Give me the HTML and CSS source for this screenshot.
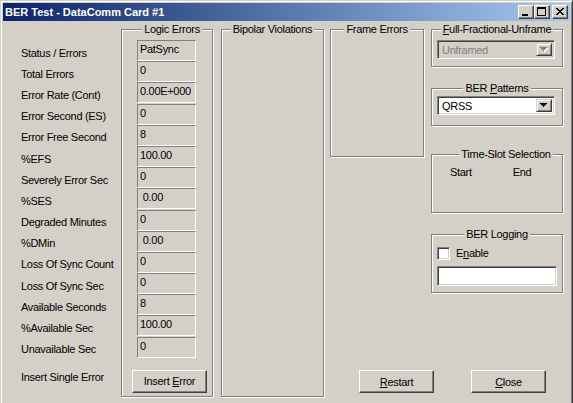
FILE: index.html
```html
<!DOCTYPE html>
<html lang="en">
  <head>
    <meta charset="UTF-8" />
    <title>BER Test - DataComm Card #1</title>
    <link rel="stylesheet" href="styles.css">
  </head>
  <body>
    <div class="window">
      <!-- Title bar -->
      <div class="titlebar">
        <span class="title">BER Test - DataComm Card #1</span>
        <div class="caption-buttons">
          <button class="cap-btn" title="Minimize">
            <svg width="14" height="12" viewBox="0 0 14 12"><path d="M3 8h6v2H3z"/></svg>
          </button>
          <button class="cap-btn" title="Maximize">
            <svg width="14" height="12" viewBox="0 0 14 12"><path d="M2 1h9v9H2zM3 3v6h7V3z" fill-rule="evenodd"/></svg>
          </button>
          <button class="cap-btn close" title="Close">
            <svg width="14" height="12" viewBox="0 0 14 12"><path d="M3 2h2v1H3zM9 2h2v1H9zM4 3h2v1H4zM8 3h2v1H8zM5 4h4v1H5zM6 5h2v1H6zM5 6h4v1H5zM4 7h2v1H4zM8 7h2v1H8zM3 8h2v1H3zM9 8h2v1H9z"/></svg>
          </button>
        </div>
      </div>

      <div class="client">
        <!-- Row captions -->
        <div class="labels">
          <div class="label">Status / Errors</div>
          <div class="label">Total Errors</div>
          <div class="label">Error Rate (Cont)</div>
          <div class="label">Error Second (ES)</div>
          <div class="label">Error Free Second</div>
          <div class="label">%EFS</div>
          <div class="label">Severely Error Sec</div>
          <div class="label">%SES</div>
          <div class="label">Degraded Minutes</div>
          <div class="label">%DMin</div>
          <div class="label">Loss Of Sync Count</div>
          <div class="label">Loss Of Sync Sec</div>
          <div class="label">Available Seconds</div>
          <div class="label">%Available Sec</div>
          <div class="label">Unavailable Sec</div>
          <div class="label insert-label">Insert Single Error</div>
        </div>

        <!-- Logic errors -->
        <fieldset class="group logic">
          <legend>Logic Errors</legend>
          <div class="values">
            <div class="value">PatSync</div>
            <div class="value">0</div>
            <div class="value">0.00E+000</div>
            <div class="value">0</div>
            <div class="value">8</div>
            <div class="value">100.00</div>
            <div class="value">0</div>
            <div class="value"> 0.00</div>
            <div class="value">0</div>
            <div class="value"> 0.00</div>
            <div class="value">0</div>
            <div class="value">0</div>
            <div class="value">8</div>
            <div class="value">100.00</div>
            <div class="value">0</div>
          </div>
          <button class="btn insert-btn">Insert <u>E</u>rror</button>
        </fieldset>

        <fieldset class="group bipolar">
          <legend>Bipolar Violations</legend>
        </fieldset>

        <div class="side">
          <div class="side-top">
            <fieldset class="group frame">
              <legend>Frame Errors</legend>
            </fieldset>

            <div class="options">
              <fieldset class="group framing">
                <legend><u>F</u>ull-Fractional-Unframe</legend>
                <div class="combo disabled">
                  <span class="combo-text">Unframed</span>
                  <span class="combo-arrow">
                    <svg width="8" height="5" viewBox="0 0 8 5"><path class="shade" d="M1 1h7v1H1zM2 2h5v1H2zM3 3h3v1H3zM4 4h1v1H4z"/><path d="M0 0h7v1H0zM1 1h5v1H1zM2 2h3v1H2zM3 3h1v1H3z"/></svg>
                  </span>
                </div>
              </fieldset>

              <fieldset class="group patterns">
                <legend>BER <u>P</u>atterns</legend>
                <div class="combo">
                  <span class="combo-text">QRSS</span>
                  <span class="combo-arrow">
                    <svg width="8" height="5" viewBox="0 0 8 5"><path d="M0 0h7v1H0zM1 1h5v1H1zM2 2h3v1H2zM3 3h1v1H3z"/></svg>
                  </span>
                </div>
              </fieldset>

              <fieldset class="group timeslot">
                <legend>Time-Slot Selection</legend>
                <div class="slot-head">
                  <span>Start</span>
                  <span>End</span>
                </div>
              </fieldset>

              <fieldset class="group logging">
                <legend>BER Logging</legend>
                <label class="check">
                  <span class="check-box"></span>
                  <span>E<u>n</u>able</span>
                </label>
                <div class="textbox"></div>
              </fieldset>
            </div>
          </div>

          <div class="actions">
            <button class="btn"><u>R</u>estart</button>
            <button class="btn"><u>C</u>lose</button>
          </div>
        </div>
      </div>
    </div>
  </body>
</html>
```

FILE: styles.css
```css
:root {
  --face: #d4d0c8;
  --shadow: #808080;
  --dark-shadow: #404040;
  --highlight: #ffffff;
}

* {
  box-sizing: border-box;
}

body {
  margin: 0;
  overflow: hidden;
  background: var(--face);
  font-family: "Liberation Sans", Arial, sans-serif;
  font-size: 11px;
  letter-spacing: -0.3px;
  color: #000;
}

/* Window frame */
.window {
  width: 573px;
  height: 420px;
  padding: 2px;
  background: var(--face);
  border: 1px solid;
  border-color: var(--face) var(--dark-shadow) var(--dark-shadow) var(--face);
  box-shadow: inset 1px 1px var(--highlight), inset -1px -1px var(--shadow);
}

.titlebar {
  height: 18px;
  display: flex;
  justify-content: space-between;
  align-items: flex-start;
  padding: 0 2px 0 2px;
  background: linear-gradient(to right, #0a246a, #a6caf0);
  color: #fff;
  font-weight: bold;
  letter-spacing: 0;
  line-height: 18px;
}

.caption-buttons {
  display: flex;
  margin-top: 2px;
}

.cap-btn {
  width: 16px;
  height: 14px;
  padding: 0;
  display: flex;
  border: 1px solid;
  border-color: var(--highlight) var(--dark-shadow) var(--dark-shadow) var(--highlight);
  box-shadow: inset -1px -1px var(--shadow);
  background: var(--face);
}

.cap-btn.close {
  margin-left: 2px;
}

/* Client area */
.client {
  display: flex;
  align-items: flex-start;
  padding-top: 2px;
}

.labels {
  width: 118px;
  padding: 19.6px 0 0 18px;
}

.label {
  height: 21.2px;
  line-height: 21.2px;
  white-space: nowrap;
}

.insert-label {
  margin-top: 7px;
}

/* Group boxes */
.group {
  margin: 0;
  padding: 0;
  min-width: 0;
  border: 1px solid var(--shadow);
  box-shadow: 1px 1px var(--highlight), inset 1px 1px var(--highlight);
}

.group legend {
  margin: 0 auto;
  padding: 0 2px;
  line-height: 13px;
  background: var(--face);
}

.logic {
  width: 92px;
  height: 374px;
  margin-right: 8px;
  padding: 4px 0 0 10px;
}

.values {
  display: flex;
  flex-direction: column;
  gap: 0.2px;
  padding-left: 5px;
}

.value {
  width: 59px;
  height: 21px;
  padding: 2px 0 0 2px;
  line-height: 13px;
  white-space: pre;
  border: 1px solid;
  border-color: var(--shadow) var(--highlight) var(--highlight) var(--shadow);
}

.btn {
  width: 75px;
  height: 23px;
  padding: 0;
  font: inherit;
  letter-spacing: inherit;
  color: #000;
  background: var(--face);
  border: 1px solid;
  border-color: var(--highlight) var(--dark-shadow) var(--dark-shadow) var(--highlight);
  box-shadow: inset -1px -1px var(--shadow);
}

.insert-btn {
  margin-top: 12.2px;
}

.bipolar {
  width: 103px;
  height: 374px;
  margin-right: 6px;
}

.side {
  display: flex;
  flex-direction: column;
}

.side-top {
  display: flex;
  align-items: flex-start;
  gap: 7px;
}

.frame {
  width: 94px;
  height: 134px;
}

.options {
  width: 132px;
  display: flex;
  flex-direction: column;
}

.framing {
  height: 44px;
  padding: 4px 5px 0;
}

.patterns {
  height: 44px;
  margin-top: 15px;
  padding: 1px 5px 0;
}

.timeslot {
  height: 65px;
  margin-top: 22px;
  padding: 5px 0 0 18px;
}

.slot-head {
  display: flex;
  gap: 41px;
  line-height: 13px;
}

.logging {
  height: 65px;
  margin-top: 15px;
  padding: 6px 5px 0;
}

/* Combo boxes */
.combo {
  width: 118px;
  height: 19px;
  display: flex;
  padding: 2px;
  background: #fff;
  border: 1px solid;
  border-color: var(--shadow) var(--highlight) var(--highlight) var(--shadow);
  box-shadow: inset 1px 1px var(--dark-shadow), inset -1px -1px var(--face);
}

.combo-text {
  flex: 1;
  padding-left: 2px;
  line-height: 15px;
}

.combo-arrow {
  width: 16px;
  display: flex;
  align-items: center;
  justify-content: center;
  background: var(--face);
  border: 1px solid;
  border-color: var(--face) var(--dark-shadow) var(--dark-shadow) var(--face);
  box-shadow: inset 1px 1px var(--highlight), inset -1px -1px var(--shadow);
}

.combo.disabled {
  background: var(--face);
  color: var(--shadow);
}

.combo.disabled svg {
  fill: var(--shadow);
}

.combo.disabled .shade {
  fill: var(--highlight);
}

/* Logging */
.check {
  display: flex;
  align-items: center;
  gap: 6px;
  line-height: 13px;
}

.check-box {
  width: 13px;
  height: 13px;
  background: #fff;
  border: 1px solid;
  border-color: var(--shadow) var(--highlight) var(--highlight) var(--shadow);
  box-shadow: inset 1px 1px var(--dark-shadow), inset -1px -1px var(--face);
}

.textbox {
  width: 120px;
  height: 20px;
  margin-top: 6px;
  background: #fff;
  border: 1px solid;
  border-color: var(--shadow) var(--highlight) var(--highlight) var(--shadow);
  box-shadow: inset 1px 1px var(--dark-shadow), inset -1px -1px var(--face);
}

.actions {
  display: flex;
  gap: 37px;
  margin-top: 77px;
  padding-left: 29px;
}
```
